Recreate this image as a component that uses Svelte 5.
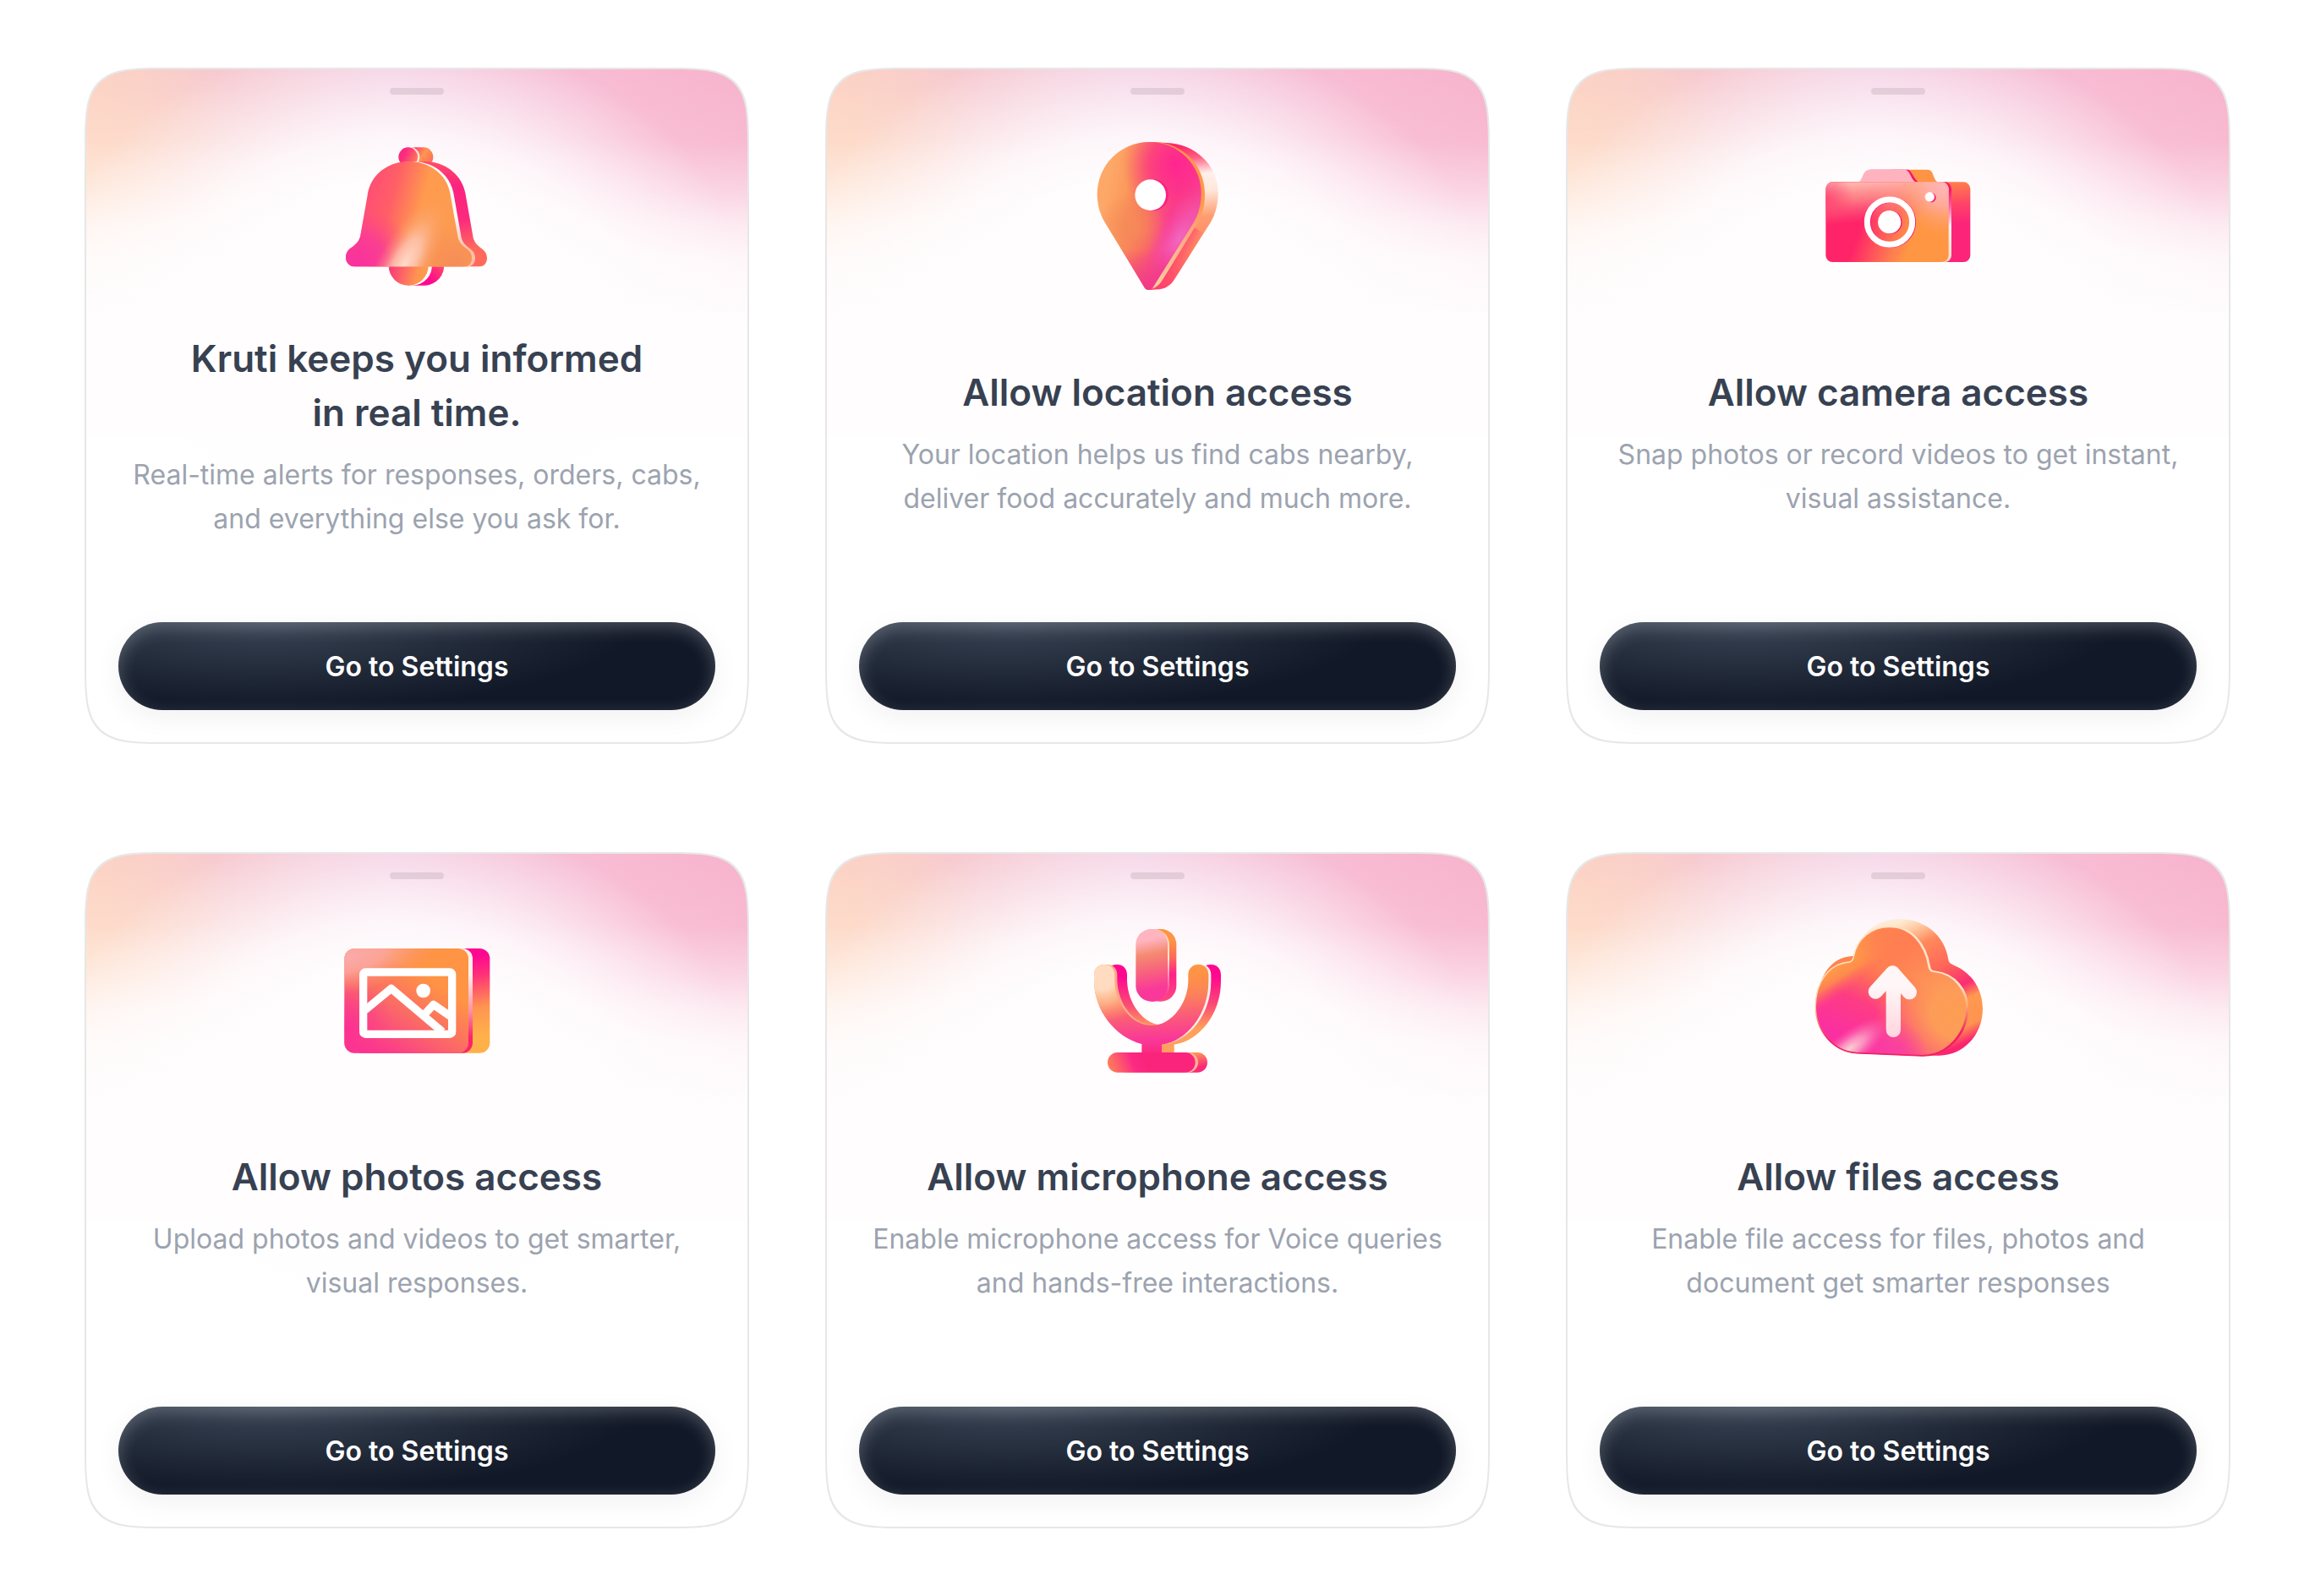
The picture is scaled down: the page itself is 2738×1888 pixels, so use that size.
<script>
  const cards = [
    {
      icon: 'bell',
      title: 'Kruti keeps you informed\nin real time.',
      text: 'Real-time alerts for responses, orders, cabs,\nand everything else you ask for.',
      tall: true
    },
    {
      icon: 'pin',
      title: 'Allow location access',
      text: 'Your location helps us find cabs nearby,\ndeliver food accurately and much more.'
    },
    {
      icon: 'camera',
      title: 'Allow camera access',
      text: 'Snap photos or record videos to get instant,\nvisual assistance.'
    },
    {
      icon: 'photo',
      title: 'Allow photos access',
      text: 'Upload photos and videos to get smarter,\nvisual responses.'
    },
    {
      icon: 'mic',
      title: 'Allow microphone access',
      text: 'Enable microphone access for Voice queries\nand hands-free interactions.'
    },
    {
      icon: 'cloud',
      title: 'Allow files access',
      text: 'Enable file access for files, photos and\ndocument get smarter responses'
    }
  ];

  // Each icon is drawn on its own 600 unit square
  const viewBoxes = {
    bell: '9 -12 600 600',
    pin: '-33 3 600 600',
    camera: '15 -87 600 600',
    photo: '9 -48 600 600',
    mic: '-33 -3 600 600',
    cloud: '45 27 600 600'
  };

  const bellBody =
    'M283 93C205 93 145 140 134 212L110 350C107 375 92 388 75 400C62 409 57 420 57 436A30 30 0 0 0 88 466L478 466C495 466 504 452 504 436C504 422 498 412 488 404C468 390 456 380 453 352L427 205C415 140 355 93 283 93Z';
  const pinBody =
    'M238 39C341 39 422 121 422 222C422 262 412 296 395 325L250 556C243 566 228 567 221 556L78 320C62 293 53 260 53 224C53 121 136 39 238 39Z';
  const micCup =
    'M42 225V204C42 182 58 168 79 168C100 168 115 182 115 204V225C118 310 175 384 247 384C318 384 374 305 376 228V204C376 182 392 168 412 168C433 168 448 182 448 204V228C448 345 370 440 282 452V480H211V450C115 425 42 330 42 225Z';
  const cloudBody =
    'M52 345C52 260 100 195 170 190C182 188 185 180 187 170C200 105 250 65 315 65C390 65 440 125 453 205C455 218 460 222 475 224C545 232 588 290 588 352C588 440 520 521 430 521L195 511C110 505 52 430 52 345Z';
</script>

<main class="board">
  {#each cards as card (card.icon)}
    <section class="card">
      <div class="handle"></div>
      <svg class="icon" viewBox={viewBoxes[card.icon]} aria-hidden="true">
        {#if card.icon === 'bell'}
          <defs>
            <linearGradient id="bell-front" gradientUnits="userSpaceOnUse" x1="100" y1="250" x2="400" y2="330">
              <stop offset="0" stop-color="#ff4a78" />
              <stop offset="0.35" stop-color="#ff5f66" />
              <stop offset="0.7" stop-color="#ff9a4e" />
              <stop offset="1" stop-color="#fd9c50" />
            </linearGradient>
            <radialGradient id="bell-pink" gradientUnits="userSpaceOnUse" cx="100" cy="460" r="210">
              <stop offset="0" stop-color="#f9309f" />
              <stop offset="0.5" stop-color="#f9389a" stop-opacity="0.8" />
              <stop offset="1" stop-color="#ff4a80" stop-opacity="0" />
            </radialGradient>
            <radialGradient id="bell-shade" gradientUnits="userSpaceOnUse" cx="440" cy="466" r="160">
              <stop offset="0" stop-color="#f58c58" />
              <stop offset="1" stop-color="#f58c58" stop-opacity="0" />
            </radialGradient>
            <radialGradient id="bell-glow" gradientUnits="userSpaceOnUse" cx="0" cy="0" r="1" gradientTransform="translate(262 464) rotate(-62) scale(270 94)">
              <stop offset="0" stop-color="#ffdccb" />
              <stop offset="0.4" stop-color="#fdc4ae" stop-opacity="0.85" />
              <stop offset="0.7" stop-color="#fbb08a" stop-opacity="0.35" />
              <stop offset="1" stop-color="#fba070" stop-opacity="0" />
            </radialGradient>
            <linearGradient id="bell-rim" gradientUnits="userSpaceOnUse" x1="0" y1="100" x2="0" y2="466">
              <stop offset="0.5" stop-color="#fff" />
              <stop offset="0.85" stop-color="#ffbfa6" />
            </linearGradient>
            <linearGradient id="bell-back" gradientUnits="userSpaceOnUse" x1="380" y1="90" x2="440" y2="440">
              <stop offset="0" stop-color="#ff4a68" />
              <stop offset="0.25" stop-color="#fb247f" />
              <stop offset="0.6" stop-color="#fb2a7c" />
              <stop offset="0.9" stop-color="#ff6a5c" />
            </linearGradient>
            <linearGradient id="bell-knob" gradientUnits="userSpaceOnUse" x1="250" y1="65" x2="315" y2="95">
              <stop offset="0.2" stop-color="#fb2a80" />
              <stop offset="1" stop-color="#ff8452" />
            </linearGradient>
            <linearGradient id="bell-knob-back" gradientUnits="userSpaceOnUse" x1="300" y1="45" x2="367" y2="90">
              <stop offset="0" stop-color="#ff3a70" />
              <stop offset="0.5" stop-color="#ff9650" />
              <stop offset="1" stop-color="#ff6a5c" />
            </linearGradient>
            <linearGradient id="bell-clapper" gradientUnits="userSpaceOnUse" x1="215" y1="480" x2="345" y2="510">
              <stop offset="0" stop-color="#fb3c78" />
              <stop offset="0.75" stop-color="#ff984e" />
            </linearGradient>
            <linearGradient id="bell-clapper-back" gradientUnits="userSpaceOnUse" x1="400" y1="466" x2="330" y2="530">
              <stop offset="0" stop-color="#ff4668" />
              <stop offset="0.7" stop-color="#ff088c" />
            </linearGradient>
          </defs>
          <rect x="270" y="43" width="97" height="68" rx="34" fill="url(#bell-knob-back)" />
          <rect x="252" y="43" width="67" height="68" rx="33" fill="#ffe3dc" />
          <rect x="244" y="43" width="68" height="68" rx="34" fill="url(#bell-knob)" />
          <path d="M264 455h141a70 70 0 0 1-67 78h-60z" fill="url(#bell-clapper-back)" />
          <path d="M221 455h141a70 70 0 0 1-67 78h-15z" fill="#fff" />
          <path d="M209 463h141a70 70 0 0 1-141 0z" fill="url(#bell-clapper)" />
          <path d={bellBody} transform="translate(54 0)" fill="url(#bell-back)" />
          <path d={bellBody} transform="translate(12 0)" fill="url(#bell-rim)" />
          <path d={bellBody} fill="url(#bell-front)" />
          <path d={bellBody} fill="url(#bell-pink)" />
          <path d={bellBody} fill="url(#bell-shade)" />
          <path d={bellBody} fill="url(#bell-glow)" />
        {:else if card.icon === 'pin'}
          <defs>
            <linearGradient id="pin-front" gradientUnits="userSpaceOnUse" x1="80" y1="240" x2="400" y2="300">
              <stop offset="0" stop-color="#fda868" />
              <stop offset="0.2" stop-color="#fb9a5c" />
              <stop offset="0.45" stop-color="#f9705e" />
              <stop offset="0.75" stop-color="#fa3a90" />
              <stop offset="1" stop-color="#f5489f" />
            </linearGradient>
            <radialGradient id="pin-top" gradientUnits="userSpaceOnUse" cx="330" cy="120" r="190">
              <stop offset="0" stop-color="#ff2590" />
              <stop offset="0.5" stop-color="#fd3088" stop-opacity="0.7" />
              <stop offset="1" stop-color="#fb4a78" stop-opacity="0" />
            </radialGradient>
            <radialGradient id="pin-orange" gradientUnits="userSpaceOnUse" cx="175" cy="340" r="120">
              <stop offset="0" stop-color="#f58a58" />
              <stop offset="1" stop-color="#f58a58" stop-opacity="0" />
            </radialGradient>
            <radialGradient id="pin-violet" gradientUnits="userSpaceOnUse" cx="0" cy="0" r="1" gradientTransform="translate(345 380) rotate(-58) scale(190 84)">
              <stop offset="0" stop-color="#f268c0" />
              <stop offset="1" stop-color="#f450a8" stop-opacity="0" />
            </radialGradient>
            <linearGradient id="pin-tip" gradientUnits="userSpaceOnUse" x1="0" y1="420" x2="0" y2="560">
              <stop offset="0" stop-color="#f03a88" stop-opacity="0" />
              <stop offset="1" stop-color="#f03a88" />
            </linearGradient>
            <linearGradient id="pin-rim" gradientUnits="userSpaceOnUse" x1="0" y1="60" x2="0" y2="540">
              <stop offset="0.4" stop-color="#ff9848" />
              <stop offset="0.65" stop-color="#fdaa84" />
              <stop offset="1" stop-color="#ffc8a0" />
            </linearGradient>
            <linearGradient id="pin-back" gradientUnits="userSpaceOnUse" x1="370" y1="55" x2="430" y2="560">
              <stop offset="0" stop-color="#ff2a6c" />
              <stop offset="0.08" stop-color="#ff5c80" />
              <stop offset="0.2" stop-color="#fff0ea" />
              <stop offset="0.32" stop-color="#ffe8dc" />
              <stop offset="0.5" stop-color="#ff9c70" />
              <stop offset="0.72" stop-color="#ff8860" />
              <stop offset="1" stop-color="#ff4068" />
            </linearGradient>
            <linearGradient id="pin-back-low" gradientUnits="userSpaceOnUse" x1="290" y1="470" x2="350" y2="505">
              <stop offset="0" stop-color="#ff3a70" />
              <stop offset="1" stop-color="#ff3a70" stop-opacity="0" />
            </linearGradient>
          </defs>
          <path d="M238 39L300 42C400 45 482 121 482 220C482 262 472 296 455 325L328 525C312 550 293 562 262 562L235 564Z" fill="url(#pin-back)" />
          <path d="M300 400L328 525C312 550 293 562 262 562L235 564ZL380 330L430 364L328 525Z" fill="url(#pin-back-low)" />
          <path d="M260 39C360 45 435 125 435 222C435 262 428 295 408 328L287 525C275 545 262 556 246 560L230 500Z" fill="url(#pin-rim)" />
          <path d={pinBody} fill="url(#pin-front)" />
          <path d={pinBody} fill="url(#pin-top)" />
          <path d={pinBody} fill="url(#pin-orange)" />
          <path d={pinBody} fill="url(#pin-violet)" />
          <path d={pinBody} fill="url(#pin-tip)" />
          <circle cx="250" cy="227" r="56" fill="#fb1f86" />
          <circle cx="242" cy="227" r="55" fill="#fff" />
        {:else if card.icon === 'camera'}
          <defs>
            <linearGradient id="cam-front" gradientUnits="userSpaceOnUse" x1="150" y1="220" x2="400" y2="310">
              <stop offset="0.15" stop-color="#ff2468" />
              <stop offset="0.65" stop-color="#ff7a50" />
              <stop offset="0.85" stop-color="#ff9644" />
            </linearGradient>
            <linearGradient id="cam-sheen" gradientUnits="userSpaceOnUse" x1="240" y1="91" x2="250" y2="230">
              <stop offset="0" stop-color="#ffb4ac" />
              <stop offset="0.4" stop-color="#fda090" stop-opacity="0.7" />
              <stop offset="1" stop-color="#ff7080" stop-opacity="0" />
            </linearGradient>
            <radialGradient id="cam-corner" gradientUnits="userSpaceOnUse" cx="480" cy="110" r="170">
              <stop offset="0" stop-color="#ffb4b8" />
              <stop offset="0.4" stop-color="#ffb0a4" stop-opacity="0.8" />
              <stop offset="1" stop-color="#ffa070" stop-opacity="0" />
            </radialGradient>
            <radialGradient id="cam-left" gradientUnits="userSpaceOnUse" cx="58" cy="150" r="100">
              <stop offset="0" stop-color="#ff3a70" stop-opacity="0.8" />
              <stop offset="1" stop-color="#ff3a70" stop-opacity="0" />
            </radialGradient>
            <linearGradient id="cam-rim" gradientUnits="userSpaceOnUse" x1="0" y1="91" x2="0" y2="374">
              <stop offset="0.1" stop-color="#f8146c" />
              <stop offset="0.3" stop-color="#f860a8" />
              <stop offset="0.55" stop-color="#fff2f4" />
              <stop offset="1" stop-color="#ffdcc4" />
            </linearGradient>
            <linearGradient id="cam-back" gradientUnits="userSpaceOnUse" x1="530" y1="95" x2="540" y2="240">
              <stop offset="0" stop-color="#ff7c4c" />
              <stop offset="0.5" stop-color="#ff4468" />
              <stop offset="1" stop-color="#fb2478" />
            </linearGradient>
          </defs>
          <path d="M252 91C270 82 272 55 290 47H418C444 47 436 80 455 91Z" fill="#ff9444" />
          <path d="M182 92C194 84 196 55 216 47H351C364 52 370 80 387 91Z" fill="#f8146c" />
          <path d="M174 92C190 82 188 52 210 47H338C358 47 358 80 378 92Z" fill="#ffb3bf" />
          <rect x="100" y="91" width="471" height="284" rx="24" fill="url(#cam-back)" />
          <rect x="70" y="91" width="434" height="284" rx="24" fill="url(#cam-rim)" />
          <rect x="58" y="91" width="436" height="284" rx="24" fill="url(#cam-front)" />
          <rect x="58" y="91" width="436" height="284" rx="24" fill="url(#cam-sheen)" />
          <rect x="58" y="91" width="436" height="284" rx="24" fill="url(#cam-left)" />
          <rect x="58" y="91" width="436" height="284" rx="24" fill="url(#cam-corner)" />
          <circle cx="288" cy="234" r="80" fill="none" stroke="#f8146c" stroke-width="20" />
          <circle cx="285" cy="233" r="80" fill="none" stroke="#fff" stroke-width="21" />
          <circle cx="288" cy="234" r="41" fill="#f8146c" />
          <circle cx="284" cy="233" r="41" fill="#fff" />
          <circle cx="432" cy="146" r="17" fill="#f8146c" />
          <circle cx="427" cy="144" r="17" fill="#fff" />
        {:else if card.icon === 'photo'}
          <defs>
            <linearGradient id="photo-front" gradientUnits="userSpaceOnUse" x1="120" y1="430" x2="330" y2="110">
              <stop offset="0" stop-color="#fb2c96" />
              <stop offset="0.5" stop-color="#fb6a66" />
              <stop offset="0.9" stop-color="#ff9444" />
            </linearGradient>
            <radialGradient id="photo-sheen" gradientUnits="userSpaceOnUse" cx="0" cy="0" r="1" gradientTransform="translate(70 95) rotate(-12) scale(330 130)">
              <stop offset="0" stop-color="#fbaaaa" />
              <stop offset="0.4" stop-color="#fba8a0" stop-opacity="0.85" />
              <stop offset="1" stop-color="#fb9070" stop-opacity="0" />
            </radialGradient>
            <radialGradient id="photo-left" gradientUnits="userSpaceOnUse" cx="60" cy="350" r="170">
              <stop offset="0" stop-color="#fb3094" />
              <stop offset="1" stop-color="#fb4880" stop-opacity="0" />
            </radialGradient>
            <linearGradient id="photo-rim" gradientUnits="userSpaceOnUse" x1="0" y1="66" x2="0" y2="437">
              <stop offset="0.25" stop-color="#fff0ea" />
              <stop offset="0.6" stop-color="#fb90a0" />
              <stop offset="0.85" stop-color="#fb246c" />
            </linearGradient>
            <linearGradient id="photo-back" gradientUnits="userSpaceOnUse" x1="510" y1="80" x2="570" y2="400">
              <stop offset="0.05" stop-color="#ff0890" />
              <stop offset="0.25" stop-color="#ff3078" />
              <stop offset="0.6" stop-color="#ff9450" />
              <stop offset="0.9" stop-color="#ffb04a" />
            </linearGradient>
          </defs>
          <rect x="120" y="66" width="448" height="371" rx="36" fill="url(#photo-back)" />
          <rect x="80" y="66" width="427" height="371" rx="36" fill="url(#photo-rim)" />
          <rect x="52" y="66" width="440" height="371" rx="36" fill="url(#photo-front)" />
          <rect x="52" y="66" width="440" height="371" rx="36" fill="url(#photo-left)" />
          <rect x="52" y="66" width="440" height="371" rx="36" fill="url(#photo-sheen)" />
          <g fill="none" stroke="#fff" stroke-width="28" stroke-linejoin="round">
            <rect x="119" y="150" width="315" height="220" rx="8" />
            <path d="M125 285L218 208L400 362" />
            <path d="M338 298L368 265L430 308" />
          </g>
          <circle cx="332" cy="216" r="25" fill="#fff" />
        {:else if card.icon === 'mic'}
          <defs>
            <linearGradient id="mic-head" gradientUnits="userSpaceOnUse" x1="215" y1="60" x2="260" y2="290">
              <stop offset="0.1" stop-color="#ffb4c0" />
              <stop offset="0.32" stop-color="#f58a70" />
              <stop offset="0.6" stop-color="#f85e80" />
              <stop offset="0.85" stop-color="#f9389a" />
            </linearGradient>
            <linearGradient id="mic-head-back" gradientUnits="userSpaceOnUse" x1="300" y1="60" x2="310" y2="299">
              <stop offset="0.1" stop-color="#ff9444" />
              <stop offset="0.35" stop-color="#ff6a58" />
              <stop offset="0.6" stop-color="#ff2088" />
              <stop offset="1" stop-color="#fb4a80" />
            </linearGradient>
            <linearGradient id="mic-head-rim" gradientUnits="userSpaceOnUse" x1="0" y1="42" x2="0" y2="299">
              <stop offset="0" stop-color="#ffc8a0" />
              <stop offset="0.4" stop-color="#ffe8dc" />
              <stop offset="0.7" stop-color="#fb80a8" />
              <stop offset="0.9" stop-color="#fb4090" />
            </linearGradient>
            <linearGradient id="mic-cup" gradientUnits="userSpaceOnUse" x1="230" y1="170" x2="250" y2="480">
              <stop offset="0.1" stop-color="#ff9444" />
              <stop offset="0.35" stop-color="#fb8458" />
              <stop offset="0.6" stop-color="#fb5c78" />
              <stop offset="0.85" stop-color="#f93898" />
              <stop offset="1" stop-color="#fb2a80" />
            </linearGradient>
            <radialGradient id="mic-cup-glow" gradientUnits="userSpaceOnUse" cx="70" cy="205" r="170">
              <stop offset="0.3" stop-color="#ffdcc0" />
              <stop offset="0.6" stop-color="#ffc498" stop-opacity="0.7" />
              <stop offset="1" stop-color="#ff9c60" stop-opacity="0" />
            </radialGradient>
            <linearGradient id="mic-cup-back" gradientUnits="userSpaceOnUse" x1="0" y1="168" x2="0" y2="452">
              <stop offset="0.15" stop-color="#ff0890" />
              <stop offset="0.5" stop-color="#fb4a74" />
              <stop offset="0.8" stop-color="#ffa05c" />
            </linearGradient>
            <linearGradient id="mic-cup-rim" gradientUnits="userSpaceOnUse" x1="100" y1="0" x2="450" y2="0">
              <stop offset="0" stop-color="#ffa888" />
              <stop offset="0.5" stop-color="#ffa888" />
              <stop offset="0.85" stop-color="#fff0ea" />
            </linearGradient>
            <linearGradient id="mic-base" gradientUnits="userSpaceOnUse" x1="95" y1="535" x2="210" y2="490">
              <stop offset="0" stop-color="#ff8058" />
              <stop offset="0.7" stop-color="#fb2a84" />
              <stop offset="1" stop-color="#fb247c" />
            </linearGradient>
            <linearGradient id="mic-base-back" gradientUnits="userSpaceOnUse" x1="415" y1="480" x2="430" y2="551">
              <stop offset="0" stop-color="#ff9458" />
              <stop offset="0.7" stop-color="#fb2a78" />
            </linearGradient>
          </defs>
          <path d={micCup} transform="translate(44 0)" fill="url(#mic-cup-back)" />
          <path d="M282 450H315V480H282Z" fill="#ffa05c" />
          <path d={micCup} transform="translate(9 0)" fill="url(#mic-cup-rim)" />
          <path d="M282 454H294V480H282Z" fill="#ff9c60" />
          <path d={micCup} fill="url(#mic-cup)" />
          <path d={micCup} fill="url(#mic-cup-glow)" />
          <rect x="220" y="42" width="114" height="257" rx="55" fill="url(#mic-head-back)" />
          <rect x="196" y="42" width="113" height="257" rx="55" fill="url(#mic-head-rim)" />
          <rect x="190" y="42" width="113" height="257" rx="55" fill="url(#mic-head)" />
          <rect x="130" y="480" width="314" height="71" rx="35" fill="url(#mic-base-back)" />
          <rect x="120" y="480" width="291" height="71" rx="35" fill="#ffb494" />
          <rect x="90" y="480" width="311" height="71" rx="35" fill="url(#mic-base)" />
        {:else}
          <defs>
            <linearGradient id="cloud-front" gradientUnits="userSpaceOnUse" x1="130" y1="440" x2="300" y2="100">
              <stop offset="0" stop-color="#fb30a0" />
              <stop offset="0.35" stop-color="#fd3c84" />
              <stop offset="0.6" stop-color="#ff6c58" />
              <stop offset="0.8" stop-color="#ff8a4c" />
              <stop offset="1" stop-color="#ff8050" />
            </linearGradient>
            <linearGradient id="cloud-left" gradientUnits="userSpaceOnUse" x1="95" y1="210" x2="155" y2="300">
              <stop offset="0.2" stop-color="#ff9848" />
              <stop offset="0.5" stop-color="#ff9448" stop-opacity="0.8" />
              <stop offset="1" stop-color="#ff5a68" stop-opacity="0" />
            </linearGradient>
            <radialGradient id="cloud-top" gradientUnits="userSpaceOnUse" cx="350" cy="110" r="170">
              <stop offset="0" stop-color="#ff7e52" />
              <stop offset="0.5" stop-color="#ff7e52" stop-opacity="0.8" />
              <stop offset="1" stop-color="#ff7e52" stop-opacity="0" />
            </radialGradient>
            <radialGradient id="cloud-right" gradientUnits="userSpaceOnUse" cx="550" cy="370" r="290">
              <stop offset="0" stop-color="#fd9e54" />
              <stop offset="0.3" stop-color="#fd9c58" />
              <stop offset="0.6" stop-color="#fd945c" stop-opacity="0.6" />
              <stop offset="1" stop-color="#fd8a60" stop-opacity="0" />
            </radialGradient>
            <radialGradient id="cloud-violet" gradientUnits="userSpaceOnUse" cx="320" cy="520" r="130">
              <stop offset="0" stop-color="#f93ea4" />
              <stop offset="0.4" stop-color="#f93ea4" stop-opacity="0.7" />
              <stop offset="1" stop-color="#f93ea4" stop-opacity="0" />
            </radialGradient>
            <radialGradient id="cloud-glow" gradientUnits="userSpaceOnUse" cx="0" cy="0" r="1" gradientTransform="translate(170 500) rotate(-38) scale(170 62)">
              <stop offset="0" stop-color="#fdd4d0" />
              <stop offset="0.4" stop-color="#fcb4cc" stop-opacity="0.7" />
              <stop offset="1" stop-color="#fb60b0" stop-opacity="0" />
            </radialGradient>
            <linearGradient id="cloud-rim" gradientUnits="userSpaceOnUse" x1="300" y1="65" x2="330" y2="521">
              <stop offset="0.5" stop-color="#ffe2c4" />
              <stop offset="0.65" stop-color="#ffa870" />
              <stop offset="0.85" stop-color="#f02060" />
            </linearGradient>
            <linearGradient id="cloud-back" gradientUnits="userSpaceOnUse" x1="370" y1="37" x2="590" y2="500">
              <stop offset="0" stop-color="#ffead4" />
              <stop offset="0.08" stop-color="#ffcca4" />
              <stop offset="0.2" stop-color="#ff8a5c" />
              <stop offset="0.4" stop-color="#ff6858" />
              <stop offset="0.58" stop-color="#fb2c74" />
              <stop offset="0.68" stop-color="#ff9850" />
              <stop offset="0.85" stop-color="#ff9450" />
              <stop offset="0.95" stop-color="#fb2470" />
            </linearGradient>
            <linearGradient id="cloud-arrow" gradientUnits="userSpaceOnUse" x1="0" y1="200" x2="0" y2="455">
              <stop offset="0.3" stop-color="#fff6f7" />
              <stop offset="1" stop-color="#ffd6de" />
            </linearGradient>
          </defs>
          <path d="M60 300C75 215 125 168 187 168C205 90 270 37 350 37C440 37 510 95 523 180C525 195 538 198 548 203C610 230 645 290 645 355C645 450 575 521 490 521H400Z" fill="url(#cloud-back)" />
          <path d="M72 258C95 200 130 170 187 168L180 190L100 230Z" fill="#ff8450" />
          <path d={cloudBody} transform="translate(3 0)" fill="none" stroke="url(#cloud-rim)" stroke-width="7" />
          <path d={cloudBody} fill="url(#cloud-front)" />
          <path d={cloudBody} fill="url(#cloud-left)" />
          <path d={cloudBody} fill="url(#cloud-top)" />
          <path d={cloudBody} fill="url(#cloud-right)" />
          <path d={cloudBody} fill="url(#cloud-violet)" />
          <path d={cloudBody} fill="url(#cloud-glow)" />
          <path d={cloudBody} fill="none" stroke="url(#cloud-rim)" stroke-width="4" />
          <path
            d="M328 430V240M265 294L325 228L385 296"
            fill="none"
            stroke="url(#cloud-arrow)"
            stroke-width="52"
            stroke-linecap="round"
            stroke-linejoin="round"
          />
        {/if}
      </svg>
      <div class="copy" class:tall={card.tall}>
        <h2>{card.title}</h2>
        <p>{card.text}</p>
      </div>
      <button type="button">Go to Settings</button>
    </section>
  {/each}
</main>

<style>
  :global(body) {
    margin: 0;
    background: #fff;
  }

  .board {
    display: grid;
    grid-template-columns: repeat(3, 1fr);
    grid-auto-rows: 1fr;
    gap: 128px 90px;
    padding: 80px 100px;
    font-family: Inter, 'Open Sans', sans-serif;
  }

  .card {
    display: flex;
    flex-direction: column;
    align-items: center;
    box-sizing: border-box;
    padding: 22px 38px 38px;
    border: 2px solid #e7e7e7;
    border-radius: 104px;
    corner-shape: squircle;
    /* white glow in the middle, fade to white downwards, peach to pink underneath */
    background:
      radial-gradient(ellipse 52% 290px at 47% 250px, #fffdfe 0, #fffdfe 40%, rgba(255, 253, 254, 0.82) 60%, rgba(255, 253, 254, 0.4) 80%, rgba(255, 253, 254, 0) 100%),
      linear-gradient(to bottom, rgba(255, 253, 254, 0) 0, rgba(255, 253, 254, 0.1) 85px, rgba(255, 253, 254, 0.45) 145px, rgba(255, 253, 254, 0.75) 185px, rgba(255, 253, 254, 0.92) 225px, #fffdfe 300px, #fffdfe 434px, #fff 434px),
      radial-gradient(ellipse 30% 220px at 0 170px, #ffdcc4 0, rgba(255, 220, 196, 0) 100%),
      linear-gradient(to right, #fbcfc3 0, #f7cad0 20%, #f3cbe1 46%, #f8b9d1 82%, #f7b3cc 100%);
  }

  .handle {
    width: 64px;
    height: 8px;
    border-radius: 4px;
    background: rgba(120, 100, 105, 0.16);
  }

  .icon {
    width: 200px;
    height: 200px;
    margin-top: 44px;
    overflow: visible;
  }

  .copy {
    margin: 76px 0 96px;
    text-align: center;
    white-space: pre-line;
  }

  .copy.tall {
    margin-top: 36px;
  }

  h2 {
    margin: 0 0 16px;
    color: #374151;
    font-size: 44px;
    font-weight: 600;
    line-height: 64px;
  }

  p {
    margin: 0;
    color: #9ca3af;
    font-size: 32px;
    font-weight: 400;
    line-height: 52px;
  }

  button {
    align-self: stretch;
    height: 104px;
    margin-top: auto;
    border: 0;
    border-radius: 52px;
    background: radial-gradient(ellipse 62% 100% at 25% 0, #374355 0, #27303f 45%, #111827 100%);
    box-shadow:
      0 8px 32px rgba(0, 0, 0, 0.06),
      inset 0 6px 20px rgba(255, 255, 255, 0.24);
    color: #fff;
    font-family: inherit;
    font-size: 32px;
    font-weight: 600;
    cursor: pointer;
  }
</style>
